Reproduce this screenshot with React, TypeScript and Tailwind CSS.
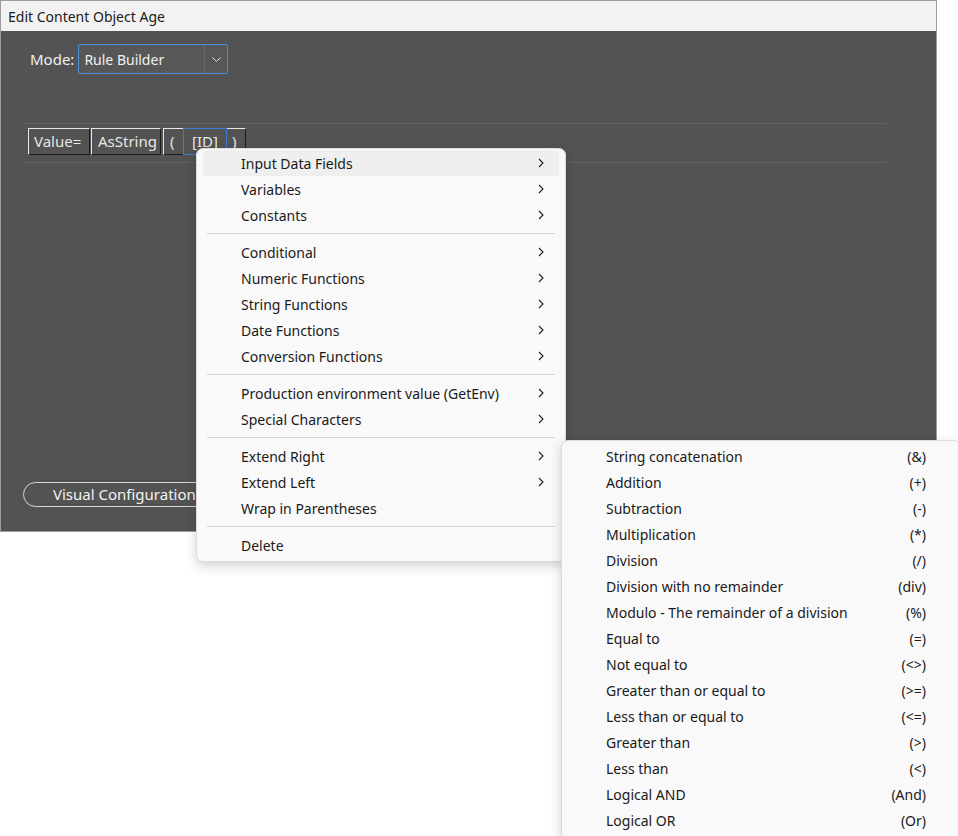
import React from 'react'

const font = { fontFamily: '"Noto Sans", "Open Sans", sans-serif' }

type Entry = { label: string; sub?: boolean; hot?: boolean } | 'sep'

const menuItems: Entry[] = [
  { label: 'Input Data Fields', sub: true, hot: true },
  { label: 'Variables', sub: true },
  { label: 'Constants', sub: true },
  'sep',
  { label: 'Conditional', sub: true },
  { label: 'Numeric Functions', sub: true },
  { label: 'String Functions', sub: true },
  { label: 'Date Functions', sub: true },
  { label: 'Conversion Functions', sub: true },
  'sep',
  { label: 'Production environment value (GetEnv)', sub: true },
  { label: 'Special Characters', sub: true },
  'sep',
  { label: 'Extend Right', sub: true },
  { label: 'Extend Left', sub: true },
  { label: 'Wrap in Parentheses' },
  'sep',
  { label: 'Delete' },
]

const operators: [string, string][] = [
  ['String concatenation', '(&)'],
  ['Addition', '(+)'],
  ['Subtraction', '(-)'],
  ['Multiplication', '(*)'],
  ['Division', '(/)'],
  ['Division with no remainder', '(div)'],
  ['Modulo - The remainder of a division', '(%)'],
  ['Equal to', '(=)'],
  ['Not equal to', '(<>)'],
  ['Greater than or equal to', '(>=)'],
  ['Less than or equal to', '(<=)'],
  ['Greater than', '(>)'],
  ['Less than', '(<)'],
  ['Logical AND', '(And)'],
  ['Logical OR', '(Or)'],
]

const Chevron = () => (
  <svg width="6" height="10" viewBox="0 0 6 10" fill="none" stroke="#1f1f1f" strokeWidth="1.1">
    <path d="M1 1l4 4-4 4" />
  </svg>
)

export default function App() {
  return (
    <div className="relative h-[836px] w-[958px] overflow-hidden bg-white" style={font}>
      <div className="flex h-[532px] w-[937px] flex-col border border-[#9c9c9c] bg-[#535353]">
        <div className="flex h-[30px] items-center bg-[#f2f2f2] px-[7px] text-[14px] text-[#1a1a1a]">
          Edit Content Object Age
        </div>

        <div className="flex flex-1 flex-col">
          <div className="ml-[29px] mt-[13px] flex items-center gap-[4px]">
            <span className="text-[15px] text-[#f0f0f0]">Mode:</span>
            <div className="flex h-[30px] w-[150px] items-center rounded-[2px] border border-[#4c8fdc] bg-[#575757]">
              <span className="flex-1 pl-[5px] text-[14px] text-[#f2f2f2]">Rule Builder</span>
              <div className="h-full w-px bg-[#6a6a6a]" />
              <div className="flex w-[22px] justify-center">
                <svg width="9" height="5" viewBox="0 0 9 5" fill="none" stroke="#e0e0e0" strokeWidth="1">
                  <path d="M0.5 0.5l4 4 4-4" />
                </svg>
              </div>
            </div>
          </div>

          <div className="ml-[22px] mr-[50px] mt-[49px] border-y border-[#626262] px-[5px] pb-[7px] pt-[4px]">
            <div className="flex gap-px text-[15px] text-[#e6e6e6]">
              <div className="flex h-[27px] w-[62px] items-center border border-t-[#e8e8e8] border-l-[#e8e8e8] border-r-[#1c1c1c] border-b-[#1c1c1c] pl-[5px]">
                Value=
              </div>
              <div className="flex h-[27px] w-[70px] items-center border border-t-[#e8e8e8] border-l-[#e8e8e8] border-r-[#1c1c1c] border-b-[#1c1c1c] pl-[6px]">
                AsString
              </div>
              <div className="ml-px flex">
                <div className="flex h-[27px] w-[20px] items-center border-t border-l border-b border-t-[#e8e8e8] border-l-[#e8e8e8] border-b-[#1c1c1c] pl-[6px]">
                  (
                </div>
                <div className="flex h-[27px] w-[44px] items-center justify-center border border-[#3a7bd5]">
                  [ID]
                </div>
                <div className="flex h-[27px] w-[19px] items-center border-t border-r border-b border-t-[#e8e8e8] border-r-[#1c1c1c] border-b-[#1c1c1c] pl-[5px]">
                  )
                </div>
              </div>
            </div>
          </div>

          <div className="flex-1" />

          <div className="mb-[24px] ml-[22px] flex h-[25px] w-[222px] items-center justify-center rounded-full border border-[#d8d8d8] text-[15px] text-[#f2f2f2]">
            Visual Configurations...
          </div>
        </div>
      </div>

      <div className="absolute left-[196px] top-[148px] w-[370px] rounded-[7px] border border-[#dcdcdc] bg-[#f9f9f9] pb-[3px] pt-[1px] shadow-[0_4px_12px_rgba(0,0,0,0.18)]">
        {menuItems.map((it, i) =>
          it === 'sep' ? (
            <div key={i} className="mx-[10px] my-[5px] h-px bg-[#d6d6d6]" />
          ) : (
            <div
              key={i}
              className={
                it.hot
                  ? 'mx-[6px] flex h-[26px] items-center rounded-[4px] bg-[#efefef] pl-[38px] pr-[15px] text-[14px] text-[#1a1a1a]'
                  : 'mx-[6px] flex h-[26px] items-center pl-[38px] pr-[15px] text-[14px] text-[#1a1a1a]'
              }
            >
              <span className="flex-1">{it.label}</span>
              {it.sub && <Chevron />}
            </div>
          )
        )}
      </div>

      <div className="absolute left-[561px] top-[440px] h-[400px] w-[400px] rounded-[7px] border border-[#dcdcdc] bg-[#f9f9f9] pt-[2px] shadow-[0_4px_12px_rgba(0,0,0,0.18)]">
        {operators.map(([label, op]) => (
          <div key={label} className="flex h-[26px] items-center pl-[44px] pr-[34px] text-[14px] text-[#1a1a1a]">
            <span className="flex-1">{label}</span>
            <span>{op}</span>
          </div>
        ))}
      </div>
    </div>
  )
}
